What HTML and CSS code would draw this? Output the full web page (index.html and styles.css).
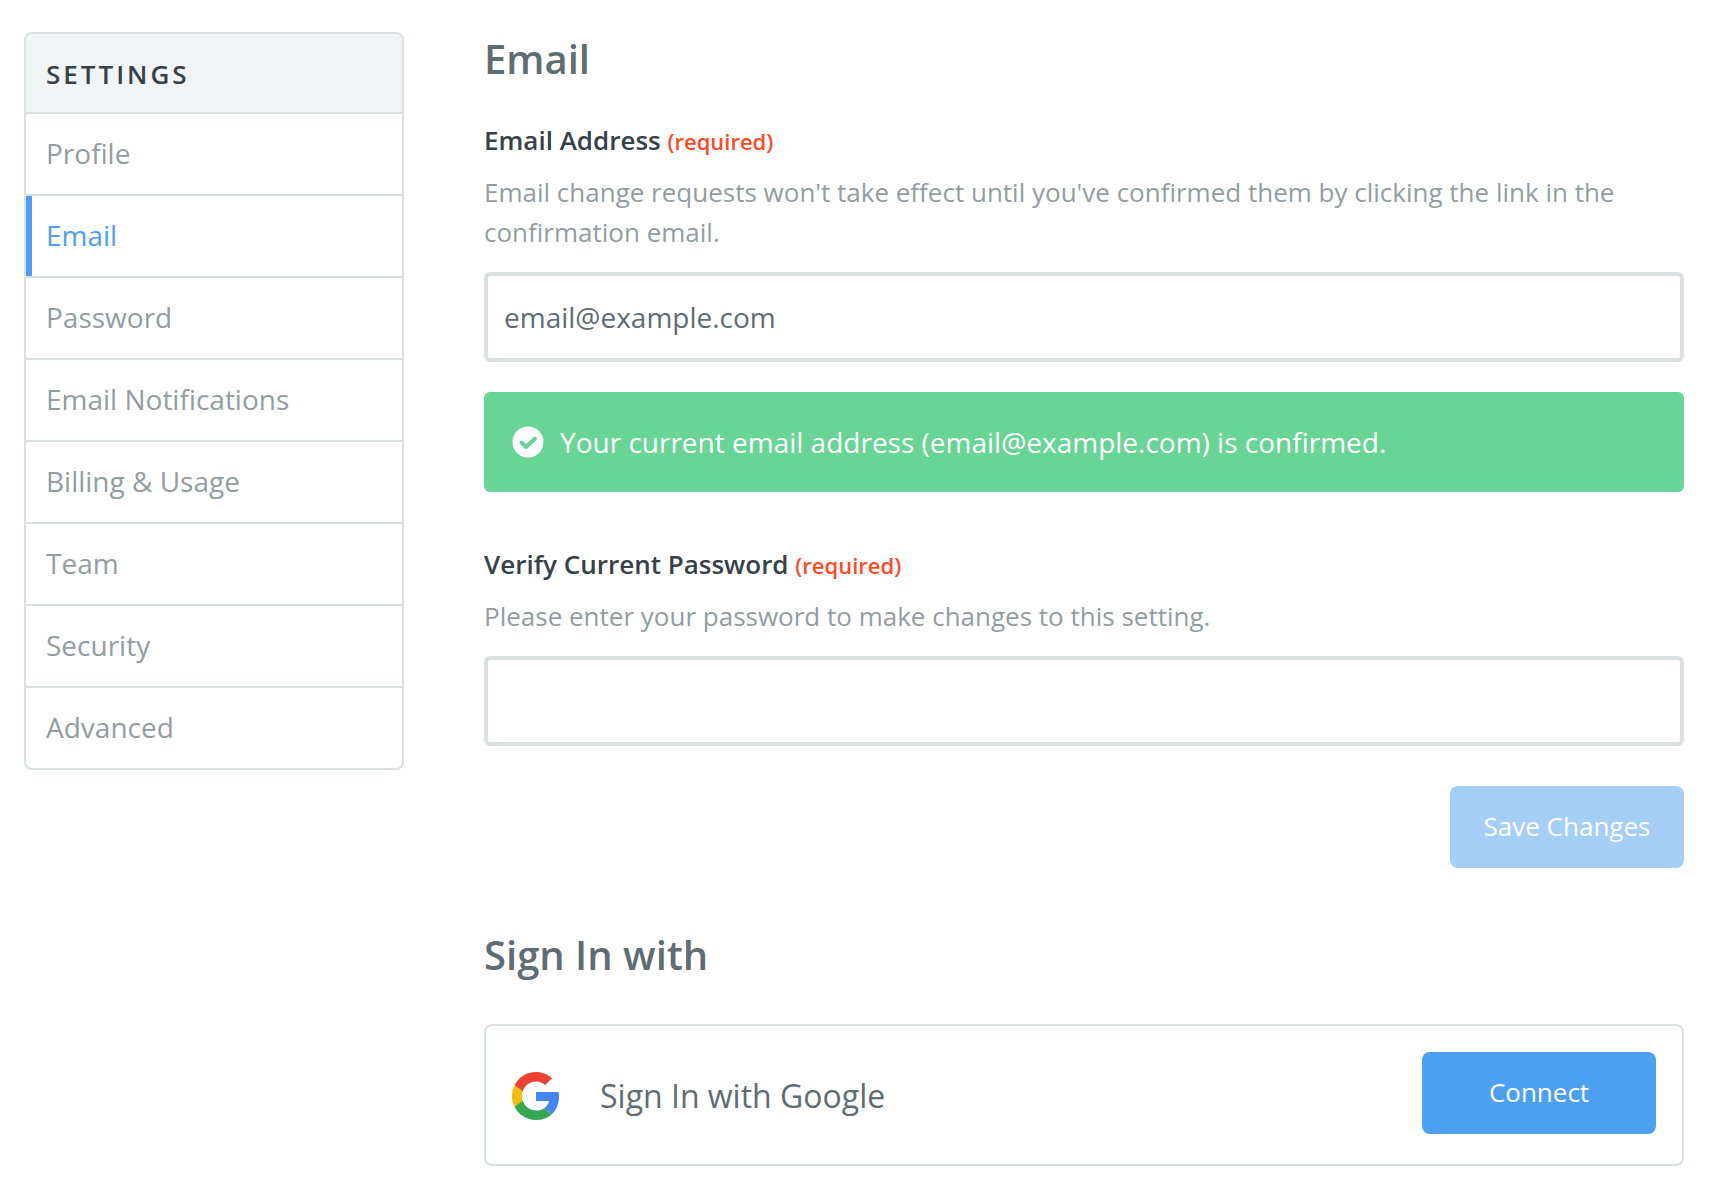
FILE: index.html
```html
<!DOCTYPE html>
<html lang="en">
<head>
    <meta charset="UTF-8" />
    <meta name="viewport" content="width=device-width, initial-scale=1.0"/>
    <title>Email Settings</title>
    <link rel="stylesheet" href="styles.css">
</head>
<body>
    <div class="page">
        <nav class="sidebar" aria-labelledby="settingsTitle">
            <h3 id="settingsTitle" class="sidebar-title">SETTINGS</h3>
            <ul class="sidebar-list">
                <li><a href="#profile">Profile</a></li>
                <li><a href="#email" class="active" aria-current="page">Email</a></li>
                <li><a href="#password">Password</a></li>
                <li><a href="#notifications">Email Notifications</a></li>
                <li><a href="#billing">Billing &amp; Usage</a></li>
                <li><a href="#team">Team</a></li>
                <li><a href="#security">Security</a></li>
                <li><a href="#advanced">Advanced</a></li>
            </ul>
        </nav>

        <main class="content">
            <h2>Email</h2>
            <form class="email-form">
                <div class="form-group">
                    <label for="emailAddress">Email Address <span class="required">(required)</span></label>
                    <p class="help">Email change requests won't take effect until you've confirmed them by clicking the link in the confirmation email.</p>
                    <input type="email" id="emailAddress" name="emailAddress" value="email@example.com" required />
                    <div class="alert" role="status">
                        <svg class="alert-icon" viewBox="0 0 32 32" aria-hidden="true">
                            <circle cx="16" cy="16" r="15.5" fill="#ffffff"/>
                            <path d="M9.5 16.5l4.5 4.5 9-8.500" fill="none" stroke="#68d496" stroke-width="4" stroke-linecap="round" stroke-linejoin="round"/>
                        </svg>
                        <span>Your current email address (email@example.com) is confirmed.</span>
                    </div>
                </div>

                <div class="form-group">
                    <label for="currentPassword">Verify Current Password <span class="required">(required)</span></label>
                    <p class="help">Please enter your password to make changes to this setting.</p>
                    <input type="password" id="currentPassword" name="currentPassword" required />
                </div>

                <div class="form-actions">
                    <button type="submit" class="button" disabled>Save Changes</button>
                </div>
            </form>

            <h2>Sign In with</h2>
            <div class="provider">
                <div class="provider-info">
                    <svg class="provider-logo" viewBox="0 0 48 48" aria-hidden="true">
                        <path fill="#ea4335" d="M24 9.500c3.540 0 6.710 1.220 9.210 3.600l6.850-6.850C35.900 2.380 30.470 0 24 0 14.620 0 6.510 5.380 2.560 13.220l7.980 6.190C12.430 13.720 17.740 9.500 24 9.500z"/>
                        <path fill="#4285f4" d="M46.980 24.550c0-1.570-.15-3.090-.38-4.550H24v9.020h12.940c-.58 2.960-2.260 5.480-4.780 7.180l7.730 6c4.510-4.180 7.090-10.360 7.090-17.650z"/>
                        <path fill="#fbbc05" d="M10.530 28.590c-.48-1.450-.76-2.990-.76-4.590s.27-3.140.76-4.590l-7.980-6.190C.92 16.460 0 20.120 0 24c0 3.880.92 7.540 2.560 10.780l7.970-6.190z"/>
                        <path fill="#34a853" d="M24 48c6.480 0 11.930-2.130 15.890-5.810l-7.730-6c-2.150 1.450-4.920 2.300-8.160 2.300-6.260 0-11.570-4.220-13.470-9.910l-7.980 6.190C6.510 42.620 14.620 48 24 48z"/>
                    </svg>
                    <span class="provider-name">Sign In with Google</span>
                </div>
                <button type="button" class="button">Connect</button>
            </div>
        </main>
    </div>
</body>
</html>
```

FILE: styles.css
```css
/* Reset and base styles */
* {
    box-sizing: border-box;
    margin: 0;
    padding: 0;
}

body {
    font-family: 'Open Sans', 'Noto Sans', sans-serif;
    font-size: 28px;
    line-height: 40px;
    background-color: #ffffff;
    color: #5f6c72;
}

.page {
    display: flex;
    align-items: flex-start;
    gap: 80px;
    padding: 32px 26px 26px 24px;
}

/* Sidebar */
.sidebar {
    flex: 0 0 380px;
    border: 2px solid #dae0e2;
    border-radius: 8px;
    overflow: hidden;
}

.sidebar-title {
    padding: 20px 20px 18px;
    background-color: #f0f4f5;
    color: #364147;
    font-size: 26px;
    font-weight: 600;
    letter-spacing: 3px;
}

.sidebar-list {
    list-style: none;
}

.sidebar-list li {
    border-top: 2px solid #dae0e2;
}

.sidebar-list a {
    display: block;
    padding: 19px 20px 21px;
    color: #939da1;
    text-decoration: none;
}

.sidebar-list a.active {
    color: #4d9ff0;
    box-shadow: inset 6px 0 0 #4d9ff0;
}

/* Main column */
.content {
    flex: 1;
    min-width: 0;
}

h2 {
    margin-bottom: 36px;
    font-size: 40px;
    font-weight: 600;
    line-height: 54px;
}

.email-form {
    margin-bottom: 60px;
}

.form-group + .form-group {
    margin-top: 54px;
}

label {
    display: block;
    margin-bottom: 14px;
    color: #364147;
    font-size: 26px;
    font-weight: 600;
    line-height: 36px;
}

.required {
    color: #ff4a26;
    font-size: 22px;
    line-height: 1;
}

.help {
    margin-bottom: 20px;
    color: #939da1;
    font-size: 26px;
}

input {
    display: block;
    width: 100%;
    height: 90px;
    padding: 0 16px;
    border: 4px solid #dae0e2;
    border-radius: 6px;
    background-color: #ffffff;
    color: #5f6c72;
    font-family: inherit;
    font-size: 28px;
}

input:focus {
    border-color: #4d9ff0;
    outline: none;
}

.alert {
    display: flex;
    align-items: center;
    gap: 16px;
    margin-top: 30px;
    padding: 30px 28px;
    border-radius: 6px;
    background-color: #68d496;
    color: #ffffff;
    font-weight: 500;
}

.alert-icon {
    flex: none;
    width: 32px;
    height: 32px;
}

.form-actions {
    display: flex;
    justify-content: flex-end;
    margin-top: 40px;
}

.button {
    min-width: 234px;
    padding: 20px 32px 22px;
    border: none;
    border-radius: 8px;
    background-color: #4d9ff0;
    color: #ffffff;
    font-family: inherit;
    font-size: 26px;
    font-weight: 500;
    line-height: 40px;
    cursor: pointer;
}

.button:disabled {
    background-color: #a5cef7;
    cursor: default;
}

/* Sign in providers */
.provider {
    display: flex;
    align-items: center;
    justify-content: space-between;
    margin-top: 42px;
    padding: 26px 26px 30px;
    border: 2px solid #dae0e2;
    border-radius: 8px;
}

.provider-info {
    display: flex;
    align-items: center;
    gap: 40px;
    padding-top: 6px;
}

.provider-logo {
    flex: none;
    width: 48px;
    height: 48px;
}

.provider-name {
    font-size: 32px;
}
```
